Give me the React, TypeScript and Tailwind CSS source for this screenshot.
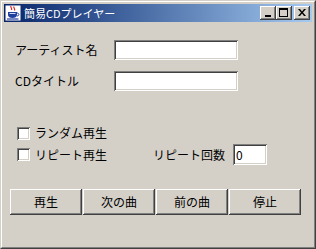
import React, { useState } from 'react';

const font = "font-['Noto_Sans_CJK_JP','Noto_Sans',sans-serif]";

const TitleButton: React.FC<{ children: React.ReactNode }> = ({ children }) => (
  <div className="w-[16px] h-[14px] bg-[#d4d0c8] flex items-center justify-center shadow-[inset_-1px_-1px_#404040,inset_1px_1px_#ffffff,inset_-2px_-2px_#808080,inset_2px_2px_#d4d0c8]">
    {children}
  </div>
);

const TextField: React.FC<{ width: string; value?: string }> = ({ width, value }) => (
  <div
    className={`${width} h-[20px] bg-white flex items-center pl-[3px] text-[12px] text-black shadow-[inset_1px_1px_#808080,inset_-1px_-1px_#ffffff,inset_2px_2px_#404040,inset_-2px_-2px_#d4d0c8]`}
  >
    {value}
  </div>
);

const Check: React.FC<{ label: string }> = ({ label }) => {
  const [on, setOn] = useState(false);
  return (
    <div className="flex items-center cursor-default" onClick={() => setOn(!on)}>
      <div className="w-[13px] h-[13px] bg-white flex items-center justify-center shadow-[inset_1px_1px_#808080,inset_-1px_-1px_#ffffff,inset_2px_2px_#404040,inset_-2px_-2px_#d4d0c8]">
        {on && <span className="text-[10px] leading-none">✓</span>}
      </div>
      <span className="ml-[5px] text-[12px] leading-none">{label}</span>
    </div>
  );
};

const Button: React.FC<{ label: string }> = ({ label }) => (
  <button className="w-[72px] h-[26px] bg-[#d4d0c8] text-[12px] text-black flex items-center justify-center shadow-[inset_-1px_-1px_#404040,inset_1px_1px_#ffffff,inset_-2px_-2px_#808080,inset_2px_2px_#d4d0c8]">
    {label}
  </button>
);

export default function App() {
  return (
    <div className={`w-[316px] h-[249px] bg-[#d4d0c8] ${font} text-black`}>
      {/* window frame */}
      <div className="w-full h-full border border-t-[#d4d0c8] border-l-[#d4d0c8] border-r-[#404040] border-b-[#404040]">
        <div className="w-full h-full border border-t-white border-l-white border-r-[#808080] border-b-[#808080] p-[2px] flex flex-col">
          {/* Title bar */}
          <div className="h-[18px] flex items-center bg-gradient-to-r from-[#0a246a] to-[#a6caf0] pl-[1px] pr-[2px]">
            <svg width="16" height="16" viewBox="0 0 16 16" className="shrink-0">
              <rect x="0.5" y="0.5" width="15" height="15" fill="#ffffff" />
              <path d="M6 1 C5 2.5 7.5 3 6.5 5 M9 1.5 C8 3 10.5 3.5 9.5 5.5" stroke="#e02020" strokeWidth="1.2" fill="none" />
              <path d="M3 7 H12 V10 C12 12 10 13 7.5 13 C5 13 3 12 3 10 Z" fill="#2040a0" />
              <path d="M12 8 C14.5 8 14.5 11 12 11" stroke="#2040a0" strokeWidth="1" fill="none" />
              <path d="M2 14 H13.5" stroke="#2040a0" strokeWidth="1.2" />
              <path d="M4.5 8.5 H10.5" stroke="#ffffff" strokeWidth="0.8" />
            </svg>
            <span className="ml-[3px] text-[11px] text-white leading-none whitespace-nowrap">簡易CDプレイヤー</span>
            <div className="flex-1" />
            <div className="flex items-center">
              <TitleButton>
                <div className="w-[6px] h-[2px] bg-black mt-[6px] -ml-[1px]" />
              </TitleButton>
              <TitleButton>
                <div className="w-[9px] h-[9px] border border-black border-t-2 -ml-[1px] -mt-[1px]" />
              </TitleButton>
              <div className="ml-[2px]">
                <TitleButton>
                  <svg width="8" height="7" viewBox="0 0 8 7" className="-ml-[1px] -mt-[1px]">
                    <path d="M0 0 L2 0 L4 2.5 L6 0 L8 0 L5 3.5 L8 7 L6 7 L4 4.5 L2 7 L0 7 L3 3.5 Z" fill="#000" />
                  </svg>
                </TitleButton>
              </div>
            </div>
          </div>

          {/* Client area */}
          <div className="flex-1 flex flex-col pt-[18px]">
            <div className="h-[20px] flex items-center pl-[11px]">
              <span className="w-[99px] text-[12px]">アーティスト名</span>
              <TextField width="w-[124px]" />
            </div>
            <div className="h-[20px] flex items-center pl-[11px] mt-[11px]">
              <span className="w-[99px] text-[12px]">CDタイトル</span>
              <TextField width="w-[124px]" />
            </div>

            <div className="h-[20px] flex items-center pl-[13px] mt-[32px]">
              <Check label="ランダム再生" />
            </div>
            <div className="h-[21px] flex items-center pl-[13px] mt-[1px]">
              <div className="w-[136px]">
                <Check label="リピート再生" />
              </div>
              <span className="w-[80px] text-[12px]">リピート回数</span>
              <div className="h-[21px] w-[34px] bg-white flex items-center pl-[3px] text-[12px] shadow-[inset_1px_1px_#808080,inset_-1px_-1px_#ffffff,inset_2px_2px_#404040,inset_-2px_-2px_#d4d0c8]">
                0
              </div>
            </div>

            <div className="flex gap-[1px] pl-[6px] mt-[24px]">
              <Button label="再生" />
              <Button label="次の曲" />
              <Button label="前の曲" />
              <Button label="停止" />
            </div>
          </div>
        </div>
      </div>
    </div>
  );
}
